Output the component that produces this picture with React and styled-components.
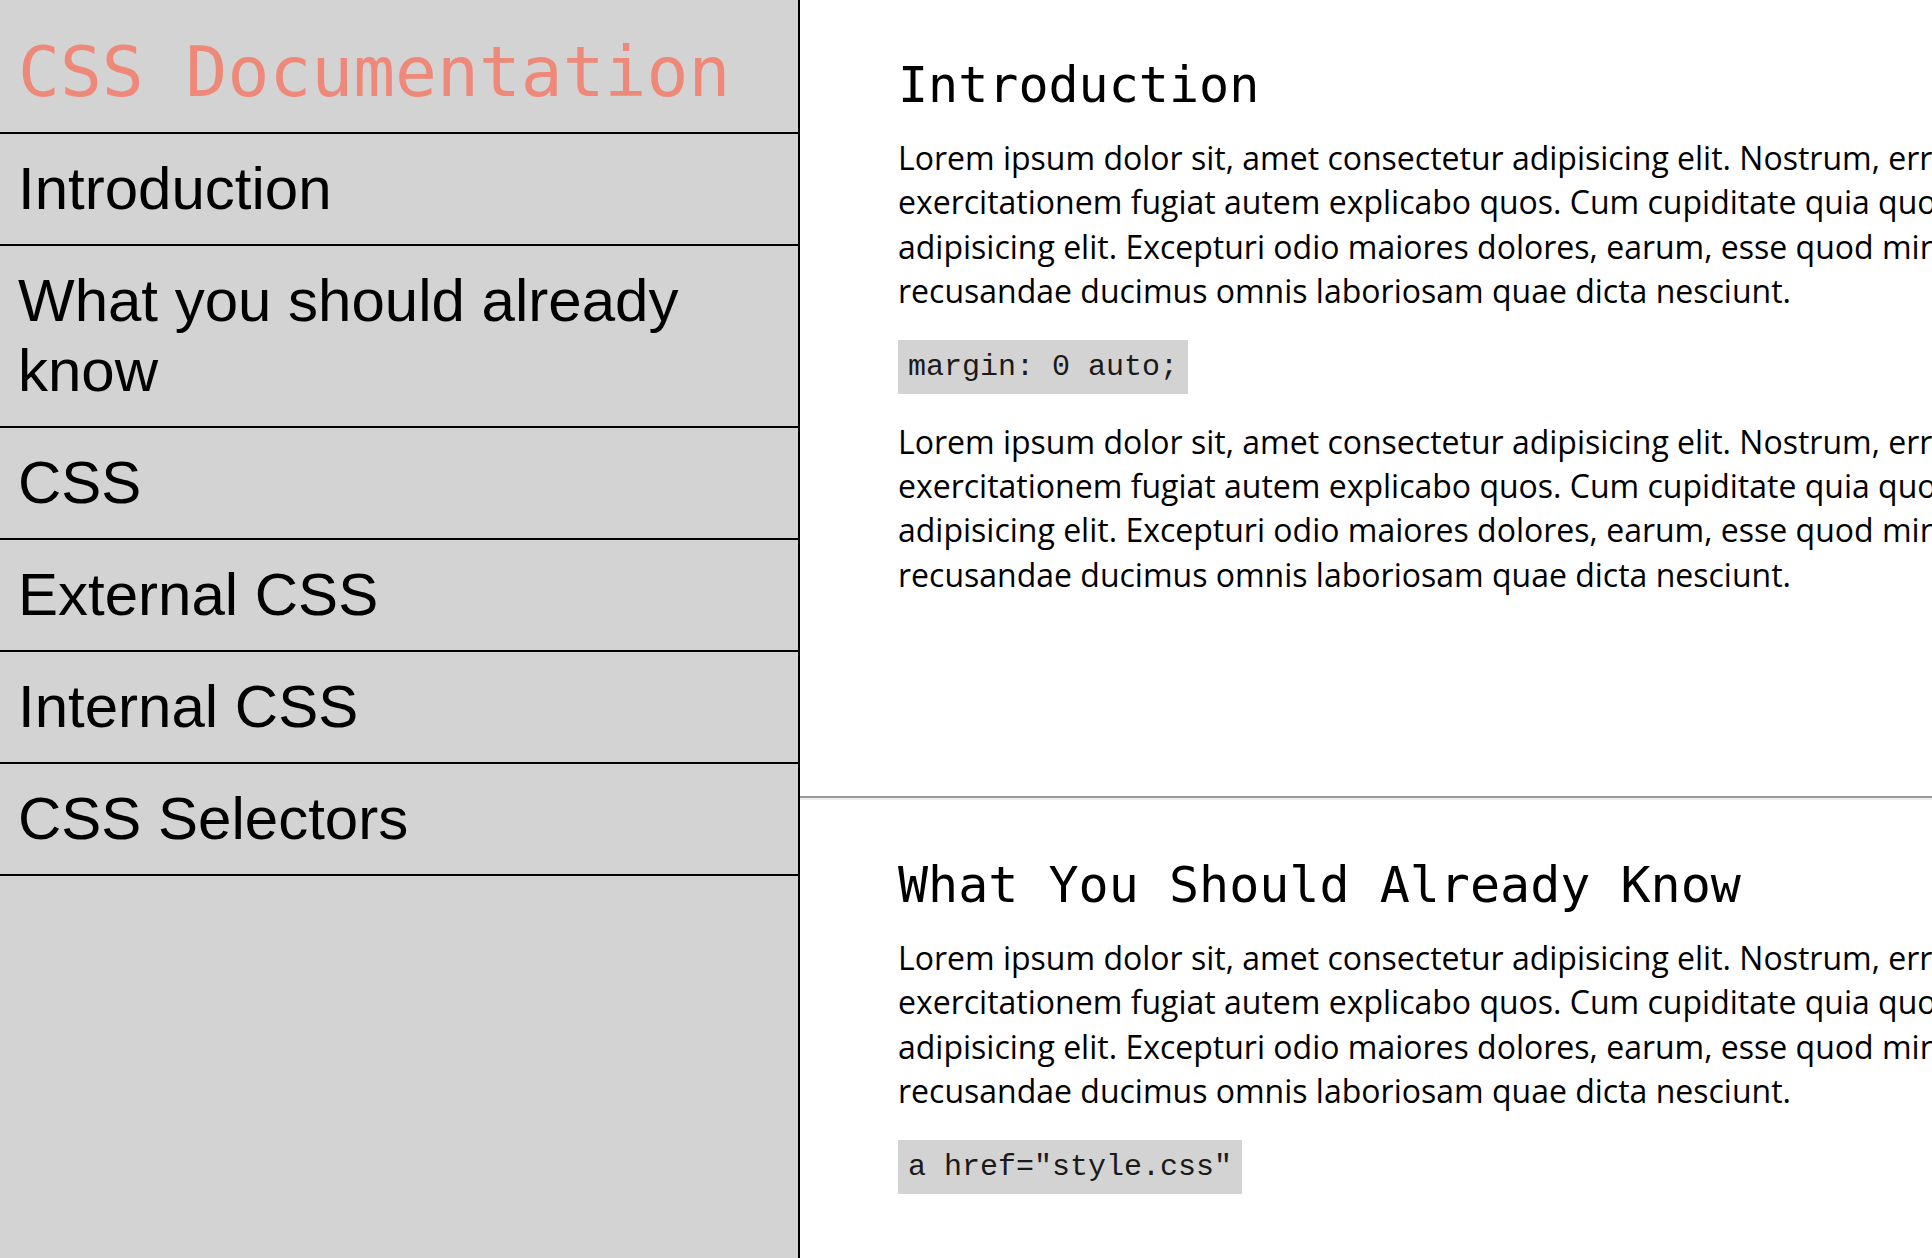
import React from 'react';
import styled, { createGlobalStyle } from 'styled-components';

const GlobalStyle = createGlobalStyle`
    * {
        box-sizing: border-box;
    }
    body {
        margin: 0;
        overflow: hidden;
        background: white;
    }
`

const navItems = [
    'Introduction',
    'What you should already know',
    'CSS',
    'External CSS',
    'Internal CSS',
    'CSS Selectors',
];

const lorem = [
    'Lorem ipsum dolor sit, amet consectetur adipisicing elit. Nostrum, error ipsam dolores doloremque voluptatum',
    'exercitationem fugiat autem explicabo quos. Cum cupiditate quia quod sunt. Lorem ipsum dolor sit amet consectetur',
    'adipisicing elit. Excepturi odio maiores dolores, earum, esse quod minima numquam quibusdam ipsa',
    'recusandae ducimus omnis laboriosam quae dicta nesciunt.',
];

const sections = [
    { title: 'Introduction', code: 'margin: 0 auto;', after: true },
    { title: 'What You Should Already Know', code: 'a href="style.css"', after: false },
];

function Lorem() {
    return (
        <Para>
            {lorem.map((line, i) => (
                <React.Fragment key={i}>
                    {line}
                    {i < lorem.length - 1 && <br />}
                </React.Fragment>
            ))}
        </Para>
    );
}

export default function App() {
    return (
        <>
        <GlobalStyle />
        <Page>
            <Sidebar>
                <Header>
                    <Title>CSS Documentation</Title>
                </Header>
                {navItems.map((item) => (
                    <NavLink key={item} href="#">{item}</NavLink>
                ))}
            </Sidebar>
            <Main>
                {sections.map((section) => (
                    <React.Fragment key={section.title}>
                        <Section>
                            <Heading>{section.title}</Heading>
                            <Lorem />
                            <Code>{section.code}</Code>
                            {section.after && <Lorem />}
                        </Section>
                        <Divider />
                    </React.Fragment>
                ))}
            </Main>
        </Page>
        </>
    );
}

const Page = styled.div`
    display: flex;
    height: 100vh;
    overflow: hidden;
`

const Sidebar = styled.nav`
    flex: 0 0 800px;
    height: 100%;
    display: flex;
    flex-direction: column;
    background-color: #d3d3d3;
    border-right: 2px solid black;
`

const Header = styled.header`
    height: 134px;
    display: flex;
    align-items: center;
    padding: 10px 18px 0;
    border-bottom: 2px solid black;
`

const Title = styled.h1`
    margin: 0;
    font-family: "DejaVu Sans Mono", monospace;
    font-weight: 400;
    font-size: 69.6px;
    color: #ee897a;
    white-space: nowrap;
`

const NavLink = styled.a`
    display: block;
    padding: 20px 18px;
    font-family: "Liberation Sans", Arial, sans-serif;
    font-size: 60px;
    line-height: 70px;
    color: black;
    text-decoration: none;
    border-bottom: 2px solid black;
`

const Main = styled.main`
    flex: 1;
    min-width: 0;
    overflow: hidden;
`

const Section = styled.section`
    min-height: 796px;
    padding: 56px 0 0 98px;
`

const Heading = styled.h2`
    margin: 0 0 22px;
    font-family: "DejaVu Sans Mono", monospace;
    font-weight: 400;
    font-size: 50px;
    color: black;
    white-space: nowrap;
`

const Para = styled.p`
    margin: 0;
    font-family: "Open Sans", sans-serif;
    font-size: 32px;
    line-height: 44.4px;
    color: black;
    white-space: nowrap;
`

const Code = styled.pre`
    width: fit-content;
    margin: 26px 0 26px;
    padding: 10px;
    background-color: #d3d3d3;
    font-family: "Liberation Mono", "Courier New", monospace;
    font-size: 30px;
    color: #1a1a1a;
`

const Divider = styled.hr`
    margin: 0;
    height: 0;
    border: none;
    border-top: 2px solid #9a9a9a;
    border-bottom: 2px solid #eeeeee;
`
